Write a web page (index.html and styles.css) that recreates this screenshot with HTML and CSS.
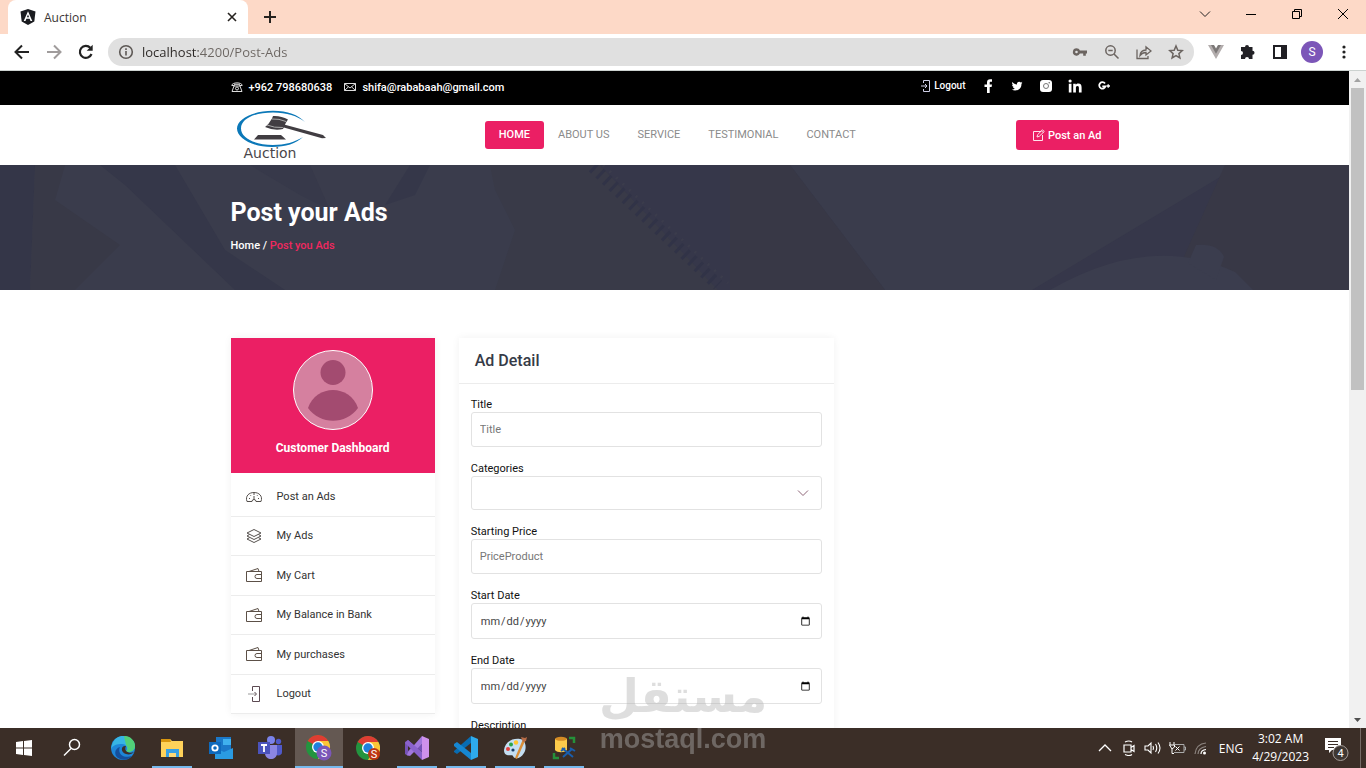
FILE: index.html
```html
<!DOCTYPE html>
<html lang="en">
  <head>
    <meta charset="utf-8" />
    <title>Auction</title>
    <meta name="viewport" content="width=device-width, initial-scale=1.0" />
    <link rel="stylesheet" href="styles.css">
  </head>

  <body>
    <!-- browser tabs -->
    <div class="tab-strip">
      <div class="tab">
        <svg width="16" height="16" viewBox="0 0 16 16"><path d="M8 0l7.500 2.600-1.200 10L8 16l-6.300-3.400L.5 2.600z" fill="#1a1c20"/><path d="M8 2.200L3.700 12h1.800l.9-2.200h3.200l.9 2.200h1.800zM8 5.500l1.100 2.800H6.900z" fill="#fff"/></svg>
        <span class="tab-title">Auction</span>
        <button class="icon-btn tab-close" aria-label="Close tab">
          <svg width="16" height="16" viewBox="0 0 16 16" fill="none" stroke="#26221f" stroke-width="1.600"><path d="M4 4l8 8M12 4l-8 8"/></svg>
        </button>
      </div>
      <button class="icon-btn tab-new" aria-label="New tab">
        <svg width="16" height="16" viewBox="0 0 16 16" stroke="#26221f" stroke-width="2"><path d="M8 2v12M2 8h12"/></svg>
      </button>
      <div class="window-buttons">
        <button class="icon-btn" aria-label="Search tabs"><svg width="12" height="12" viewBox="0 0 12 12" fill="none" stroke="#222"><path d="M1 3.500l5 5 5-5"/></svg></button>
        <button class="icon-btn" aria-label="Minimize"><svg width="12" height="12" viewBox="0 0 12 12" stroke="#000"><path d="M1 6.500h10"/></svg></button>
        <button class="icon-btn" aria-label="Restore"><svg width="12" height="12" viewBox="0 0 12 12" fill="none" stroke="#000"><path d="M1.500 3.500h7v7h-7zM3.500 3.500v-2h7v7h-2"/></svg></button>
        <button class="icon-btn" aria-label="Close"><svg width="12" height="12" viewBox="0 0 12 12" stroke="#000"><path d="M1 1l10 10M11 1L1 11"/></svg></button>
      </div>
    </div>

    <!-- address bar -->
    <div class="toolbar">
      <button class="icon-btn" aria-label="Back"><svg width="16" height="16" viewBox="0 0 16 16" fill="none" stroke="#222" stroke-width="2"><path d="M15 8H2M8 1.500L1.500 8 8 14.500"/></svg></button>
      <button class="icon-btn" aria-label="Forward"><svg width="16" height="16" viewBox="0 0 16 16" fill="none" stroke="#a09c9c" stroke-width="2"><path d="M1 8h13M8 1.500L14.500 8 8 14.500"/></svg></button>
      <button class="icon-btn" aria-label="Reload"><svg width="16" height="16" viewBox="0 0 16 16"><path d="M13.500 10A6 6 0 1 1 12.300 3.800" fill="none" stroke="#222" stroke-width="2.200"/><path d="M14.700.8v6H8.700z" fill="#222"/></svg></button>
      <div class="omnibox">
        <svg width="16" height="16" viewBox="0 0 16 16" fill="none" stroke="#5d5855" stroke-width="1.600"><circle cx="8" cy="8" r="6.300"/><path d="M8 7v4.500M8 4.200v1.700"/></svg>
        <input class="url" type="text" aria-label="Address" value="localhost:4200/Post-Ads">
        <button class="icon-btn" aria-label="Passwords"><svg width="16" height="16" viewBox="0 0 16 16" fill="#6b6460"><path fill-rule="evenodd" d="M4.500 4.200c1.500 0 2.800.9 3.400 2.300H15v3h-1.200v2.300h-2.600V9.500H7.900a3.700 3.700 0 1 1-3.400-5.300zm0 2.500a1.300 1.300 0 1 0 0 2.600 1.300 1.300 0 0 0 0-2.600z"/></svg></button>
        <button class="icon-btn" aria-label="Zoom"><svg width="16" height="16" viewBox="0 0 16 16" fill="none" stroke="#6b6460" stroke-width="1.500"><circle cx="6.500" cy="6.500" r="4.700"/><path d="M10 10l4.500 4.500M4.300 6.500h4.400"/></svg></button>
        <button class="icon-btn" aria-label="Share"><svg width="16" height="16" viewBox="0 0 16 16" fill="none" stroke="#6b6460" stroke-width="1.300"><path d="M1 5.500v9h11V12M4 11.500c.3-3.500 2.500-5.300 6-5.500V2.800L15 7l-5 4V8.500c-2.600 0-4.500.9-6 3z"/></svg></button>
        <button class="icon-btn" aria-label="Bookmark"><svg width="16" height="16" viewBox="0 0 16 16" fill="none" stroke="#6b6460" stroke-width="1.500"><path d="M8 2l1.800 4.200 4.500.4-3.400 3 1 4.400L8 11.600 4.100 14l1-4.400-3.400-3 4.500-.4z"/></svg></button>
      </div>
      <button class="icon-btn" aria-label="Vue devtools"><svg width="16" height="16" viewBox="0 0 16 16"><path d="M0 1h5l3 5 3-5h5L8 15z" fill="#b3adad"/><path d="M3 1h3l2 3.500L10 1h3L8 9.800z" fill="#7c7877"/></svg></button>
      <button class="icon-btn" aria-label="Extensions"><svg width="16" height="16" viewBox="0 0 16 16"><path d="M5 3a2 2 0 0 1 4 0h3.500v3.700a2 2 0 0 1 0 4.100V15H9a2 2 0 0 0-4 0H1v-4a2 2 0 0 0 0-4V3z" fill="#222126"/></svg></button>
      <button class="icon-btn" aria-label="Side panel"><svg width="16" height="16" viewBox="0 0 16 16"><path d="M2 2h12v12H2z" fill="#fff" stroke="#201f24" stroke-width="2"/><path d="M9 2h5v12H9z" fill="#201f24"/></svg></button>
      <button class="icon-btn" aria-label="Profile"><span class="profile">S</span></button>
      <button class="icon-btn" aria-label="Menu"><svg width="16" height="16" viewBox="0 0 16 16" fill="#222"><circle cx="8" cy="3" r="1.600"/><circle cx="8" cy="8" r="1.600"/><circle cx="8" cy="13" r="1.600"/></svg></button>
    </div>

    <div class="viewport">
      <div class="page">
        <div class="topbar">
          <div class="container topbar-row">
            <div class="contacts">
              <span class="contact">
                <svg width="12" height="12" viewBox="0 0 12 12" fill="none" stroke="#ddd"><path d="M.8 4.500C.8 1 11.200 1 11.200 4.500H8.500V3.300h-5v1.200zM3 5h6l2 5.500H1z"/><circle cx="6" cy="7.500" r="1.500"/></svg>
                +962 798680638
              </span>
              <span class="contact">
                <svg width="12" height="12" viewBox="0 0 12 12" fill="none" stroke="#ddd"><path d="M.5 2.500h11v7H.5zM.5 2.500L6 7l5.500-4.500M.5 9.500l4-3.700M11.500 9.500l-4-3.700"/></svg>
                shifa@rababaah@gmail.com
              </span>
            </div>
            <div class="socials">
              <a class="logout" href="#">
                <svg width="10" height="12" viewBox="0 0 10 12" fill="none" stroke="#cfcfe6"><path d="M2.500 3V.5h6v11h-6V9M0 6h6M4 4l2 2-2 2"/></svg>
                Logout
              </a>
              <a class="social" href="#" aria-label="Facebook"><svg width="14" height="14" viewBox="0 0 14 14" fill="#fff"><path d="M6 14V8H3.500V5.500H6v-2C6 1.300 7.200.3 9 .3h2v2.400H9.800c-.8 0-1.100.3-1.100 1v1.800H11L10.600 8H8.700v6z"/></svg></a>
              <a class="social" href="#" aria-label="Twitter"><svg width="12" height="12" viewBox="0 0 24 24" fill="#fff"><path d="M23 5.500c-.8.400-1.600.6-2.500.7.900-.6 1.600-1.400 1.900-2.500-.8.500-1.800.9-2.800 1.100A4.500 4.500 0 0 0 12 8.900C8.300 8.700 5 6.900 2.800 4.200c-1.200 2-.6 4.600 1.400 5.900-.7 0-1.400-.2-2-.5 0 2.100 1.500 4 3.600 4.400-.7.200-1.300.2-2 .1.600 1.800 2.200 3.100 4.200 3.100A9 9 0 0 1 1.400 19 12.700 12.700 0 0 0 20.900 7.700c.8-.6 1.600-1.300 2.100-2.200z"/></svg></a>
              <a class="social" href="#" aria-label="Instagram"><svg width="12" height="12" viewBox="0 0 12 12"><rect width="12" height="12" rx="3" fill="#fff"/><circle cx="6" cy="6" r="2.500" fill="none" stroke="#777"/><circle cx="9.200" cy="2.800" r=".7" fill="#555"/></svg></a>
              <a class="social" href="#" aria-label="LinkedIn"><svg width="14" height="14" viewBox="0 0 14 14" fill="#fff"><path d="M.8 4.800h2.700v8.700H.8zM5.200 4.800h2.600V6c.5-.9 1.400-1.400 2.600-1.400 2.300 0 3.200 1.400 3.200 3.800v5.100h-2.700V8.900c0-1.200-.3-2-1.400-2-1.200 0-1.600.8-1.600 2v4.600H5.200z"/><circle cx="2.100" cy="2" r="1.600"/></svg></a>
              <a class="social" href="#" aria-label="Google Plus"><svg width="12" height="12" viewBox="0 0 12 12" fill="none" stroke="#fff" stroke-width="1.800"><path d="M7 3.500A3.200 3.200 0 1 0 7.500 6.300H4.300"/><path d="M8.500 6h3.500M10.200 4.300v3.500" stroke-width="1.300"/></svg></a>
            </div>
          </div>
        </div>

        <header class="container header">
          <a class="logo" href="#">
            <svg width="92" height="38" viewBox="0 0 92 38"><path d="M69 12C62 5 52 .8 37 .8 17 .8 1 9 1 18.500S16 37 36 37c14 0 24-3.500 31-10-8 5-18 8-30 8C19 35 5 28 5 18.500S18 2.500 37 2.500c14 0 24 3.500 32 9.500z" fill="#0b78b8"/><path d="M37 6q8-.5 15 3.500l-2 3-3 6.500q-9 2-18-2l3-2.500 4-6z" fill="#413d42"/><path d="M36 9q7-.5 14 2.500M31 15q7 3 16 2.500" stroke="#aaa" fill="none"/><path d="M48 14.500l39 10.500 3 3-4 .3L46 17zM22 25h23l5 4.500H18z" fill="#413d42"/></svg>
            <span class="logo-text">Auction</span>
          </a>
          <nav class="nav">
            <a class="nav-link active" href="#">HOME</a>
            <a class="nav-link" href="#">ABOUT US</a>
            <a class="nav-link" href="#">SERVICE</a>
            <a class="nav-link" href="#">TESTIMONIAL</a>
            <a class="nav-link" href="#">CONTACT</a>
          </nav>
          <button class="post-btn">
            <svg width="12" height="12" viewBox="0 0 12 12" fill="none" stroke="#ffe3ec"><path d="M8 2.500H.5v9h9V6M4 8l.6-2.300L9.500.8l1.700 1.700-5 4.900zM8.500 1.800l1.700 1.700"/></svg>
            Post an Ad
          </button>
        </header>

        <section class="hero">
          <svg class="hero-art" viewBox="0 0 1349 125" preserveAspectRatio="xMidYMid slice">
            <path d="M0 0h35l-5 125H0z" fill="#343648"/>
            <path d="M100 0h75l50 85 60 40H235L125 20z" fill="#353749"/>
            <path d="M35 0h30l-10 35 65 45-45 45H30z" fill="#383947"/>
            <path d="M250 0h60l20 45-30-15z" fill="#37394a"/>
            <path d="M410 0h20l-15 30-30 10z" fill="#353749"/>
            <path d="M490 0h110l118 125H495l20-60-20-40z" fill="#393a48"/>
            <path d="M600 0h190l95 125H718z" fill="#36374a"/>
            <path d="M730 0h60l95 125H730z" fill="#383846"/>
            <path d="M593 2l125 118" stroke="#313347" stroke-width="12" stroke-dasharray="3 6"/>
            <path d="M603 0l125 118" stroke="#3b3c4c" stroke-width="3" stroke-dasharray="2 7"/>
            <path d="M1240 0h109v125h-317z" fill="#36374a"/>
            <path d="M1225 0h124v125h-180z" fill="#383846"/>
            <path d="M1050 125q100-58 185-18l18 18z" fill="#3b3d4e"/>
            <path d="M1188 98l8-18q22-2 28 12l-8 23z" fill="#3b3d4e"/>
          </svg>
          <div class="container hero-text">
            <h1>Post your Ads</h1>
            <p class="crumbs"><a href="#">Home</a> / <span class="current">Post you Ads</span></p>
          </div>
        </section>

        <main class="container content">
          <aside class="sidebar">
            <div class="user">
              <svg width="80" height="80" viewBox="0 0 80 80"><circle cx="40" cy="40" r="39.500" fill="#d5809f" stroke="#fff"/><circle cx="40" cy="22.500" r="12.500" fill="#a34b70"/><path d="M15 58C23 34 57 34 65 58 53 75 27 75 15 58z" fill="#a34b70"/></svg>
              <h2>Customer Dashboard</h2>
            </div>
            <ul class="menu">
              <li><a href="#"><svg width="16" height="16" viewBox="0 0 16 16" fill="none" stroke="#55504d"><path d="M1 13.500C-1 8 3 4.500 8 4.500s9 3.500 7 9h-5a2 2 0 0 0-4 0zM8 8v4"/><path d="M8 5v2M3 10.500h1M12 10.500h1M4.500 7.300l.7.700M11.500 7.300l-.7.700"/></svg>Post an Ads</a></li>
              <li><a href="#"><svg width="16" height="16" viewBox="0 0 16 16" fill="none" stroke="#55504d"><path d="M8 1.500l7 3.500-7 3.500L1 5zM3.500 6.500L1 8l7 3.500L15 8l-2.500-1.500M3.500 9.700L1 11l7 3.500 7-3.500-2.500-1.300"/></svg>My Ads</a></li>
              <li><a href="#"><svg width="16" height="16" viewBox="0 0 16 16"><g id="wallet" fill="none" stroke="#5c5047"><path d="M.5 4.500h15v10H.5zM3 4.500l9-3 1 3M15.500 7.500H11a2 2 0 0 0 0 4h4.500"/></g></svg>My Cart</a></li>
              <li><a href="#"><svg width="16" height="16" viewBox="0 0 16 16"><use href="#wallet"/></svg>My Balance in Bank</a></li>
              <li><a href="#"><svg width="16" height="16" viewBox="0 0 16 16"><use href="#wallet"/></svg>My purchases</a></li>
              <li><a href="#"><svg width="16" height="16" viewBox="0 0 16 16" fill="none" stroke="#5c4a52"><path d="M6.500 5V.5h7v15h-7V11"/><path d="M2 8h8" stroke="#999"/><path d="M8.500 6l2 2-2 2"/></svg>Logout</a></li>
            </ul>
          </aside>

          <form class="ad-form">
            <h2 class="form-title">Ad Detail</h2>
            <div class="form-body">
              <div class="field">
                <label for="title">Title</label>
                <input id="title" type="text" placeholder="Title">
              </div>
              <div class="field">
                <label for="category">Categories</label>
                <div class="select-wrap">
                  <select id="category"><option></option></select>
                  <svg width="12" height="8" viewBox="0 0 12 8" fill="none" stroke="#8e6577"><path d="M1 1.500l5 5 5-5"/></svg>
                </div>
              </div>
              <div class="field">
                <label for="price">Starting Price</label>
                <input id="price" type="text" placeholder="PriceProduct">
              </div>
              <div class="field">
                <label for="start">Start Date</label>
                <input id="start" type="date">
              </div>
              <div class="field">
                <label for="end">End Date</label>
                <input id="end" type="date">
              </div>
              <div class="field">
                <label for="description">Description</label>
                <textarea id="description" rows="4"></textarea>
              </div>
            </div>
          </form>
        </main>
      </div>
      <div class="scrollbar">
        <svg width="17" height="17" viewBox="0 0 17 17"><path d="M5 11l3.500-4 3.500 4z" fill="#a3a3a3"/></svg>
        <div class="thumb"></div>
        <svg width="17" height="17" viewBox="0 0 17 17"><path d="M5 7l3.500 4L12 7z" fill="#505050"/></svg>
      </div>
    </div>

    <!-- taskbar -->
    <div class="taskbar">
      <button class="task" aria-label="Start"><svg width="24" height="24" viewBox="0 0 24 24" fill="#fff"><path d="M4 6l7-1v6.500H4zM12 4.900L20 4v7.500h-8zM4 12.500h7V19l-7-1zM12 12.500h8V20l-8-.9z"/></svg></button>
      <button class="task" aria-label="Search"><svg width="24" height="24" viewBox="0 0 24 24" fill="none" stroke="#fff" stroke-width="1.500"><circle cx="14.500" cy="8.500" r="5"/><path d="M11 12.500L4 19.500"/></svg></button>
      <div class="apps">
        <button class="task" aria-label="Edge"><svg width="24" height="24" viewBox="0 0 24 24"><circle cx="12" cy="12" r="12" fill="#1e86d8"/><path d="M1 9C3 2 8 0 12 0c7 0 12 5 12 10 0 5-5 7-9 5.500 2-1.500 2-7.500-4-7.500C6 8 2 9 0 13z" fill="#37b5e4"/><path d="M13 0c7 0 11 5 11 10 0 5-5 7-9 5.500 2-2 2-4 0-6.500z" fill="#51d078"/><path d="M9 11c-3 6 3 12 12 9-4 5-12 5-16 0-2-4 0-8 4-9z" fill="#154f9c"/><path d="M15 10c-5-1-6 6 0 8 3 1 6 0 8-2-4 2-11 0-8-6z" fill="#3d2f28"/></svg></button>
        <button class="task running" aria-label="File Explorer"><svg width="24" height="24" viewBox="0 0 24 24"><path d="M1 3h9l2 2h11v16H1z" fill="#ffd25a"/><path d="M1 3h9l1 3H1z" fill="#d9960f"/><path d="M6 13h13v8h-3v-4H9v4H6z" fill="#38a0e4"/><path d="M9 17h7v4H9z" fill="#ffd977"/></svg></button>
        <button class="task" aria-label="Outlook"><svg width="24" height="24" viewBox="0 0 24 24"><path d="M7 1h15v21H7z" fill="#1b78c9"/><path d="M14 3h8v6h-8z" fill="#3fb0ee"/><path d="M6 12l9 4 9-4v11H6z" fill="#2a9be2"/><path d="M0 6h12v12H0z" fill="#0e6abd"/><circle cx="6" cy="12" r="2.700" fill="none" stroke="#fff" stroke-width="1.800"/></svg></button>
        <button class="task" aria-label="Teams"><svg width="24" height="24" viewBox="0 0 24 24"><circle cx="13" cy="4" r="4" fill="#7b83eb"/><circle cx="20.500" cy="5.500" r="2.700" fill="#5059c9"/><path d="M17 9h7v7c0 3-3 4-6 3z" fill="#5059c9"/><path d="M7 9h12v8c0 8-12 8-12 0z" fill="#8b86e4"/><path d="M0 6h12v12H0z" fill="#4b53bc"/><path d="M3 9h6M6 9v7" stroke="#fff" stroke-width="1.800"/></svg></button>
        <button class="task running open" aria-label="Chrome"><svg width="26" height="26" viewBox="0 0 26 26"><g id="chrome"><circle cx="12" cy="12" r="12" fill="#23943f"/><path d="M12 12L1.600 6A12 12 0 0 1 22.400 6z" fill="#df3d32"/><path d="M12 6h10.400A12 12 0 0 1 12 24l5-9z" fill="#fbc637"/><circle cx="12" cy="12" r="6" fill="#fff"/><circle cx="12" cy="12" r="4.700" fill="#1f80dd"/></g><circle cx="18" cy="18" r="7.500" fill="#7b57b8"/><text class="badge-text" x="18" y="22">S</text></svg></button>
        <button class="task" aria-label="Chrome profile"><svg width="24" height="24" viewBox="0 0 24 24"><use href="#chrome"/><circle cx="18" cy="18" r="6" fill="#bd3513"/><text class="badge-text" x="18" y="22">S</text></svg></button>
        <button class="task running" aria-label="Visual Studio"><svg width="24" height="24" viewBox="0 0 24 24"><path fill-rule="evenodd" d="M0 6l3-2 14 12V8L3 20l-3-2zM3 9v6l3-3z" fill="#7652b8"/><path d="M17 0v8L5 20l-3-1 1-3z" fill="#a177dc"/><path d="M3 4l14 12v8L0 7z" fill="#8a62cc"/><path d="M17 0l7 3v18l-7 3z" fill="#cf91ec"/></svg></button>
        <button class="task running" aria-label="Visual Studio Code"><svg width="24" height="24" viewBox="0 0 24 24"><path d="M17 0v7L3 18l-3-2v-1L17 0z" fill="#086cb2"/><path d="M0 8l3-2 14 11v7L0 10z" fill="#1687d2"/><path d="M17 0l7 3v18l-7 3z" fill="#2eabec"/></svg></button>
        <button class="task running" aria-label="Paint"><svg width="24" height="24" viewBox="0 0 24 24"><path d="M1 14C2 6 9 2 17 3c6 1 7 9 4 14-4 7-10 6-11 3-1-2-9 2-9-6z" fill="#c4def2"/><circle cx="5" cy="13" r="2" fill="#e2403e"/><circle cx="8" cy="8.500" r="2" fill="#27a34a"/><circle cx="13" cy="6.500" r="2.200" fill="#ffc52f"/><circle cx="10" cy="14" r="1.600" fill="#173b65"/><path d="M20 3l2 2-8 18-2-1z" fill="#da8e38"/><path d="M18 1l4 1 2-1-1 4-3 1z" fill="#b66c47"/></svg></button>
        <button class="task running" aria-label="SQL Server Management Studio"><svg width="24" height="24" viewBox="0 0 24 24"><path d="M3 3v11c2 3 10 3 12 0V3z" fill="#fdcb4b"/><ellipse cx="9" cy="2.800" rx="6" ry="2" fill="#d58c24"/><path d="M17 2h5v5M2 17v5h5" fill="none" stroke="#25913a" stroke-width="2.500"/><path d="M10 12l11 9M20 13L11 21M9 15l4-3M18 12l5 3" stroke="#195eae" stroke-width="2"/></svg></button>
      </div>
      <div class="tray">
        <svg width="24" height="16" viewBox="0 0 24 16" fill="none" stroke="#fff" stroke-width="1.300"><path d="M6 11l6-6 6 6"/></svg>
        <svg width="24" height="16" viewBox="0 0 24 16" fill="none" stroke="#fff" stroke-width="1.200"><path d="M7 5h7v7H7zM14 7.500l3-2v6l-3-2M8 2q4-2 7 0M8 14.500q4 2 7 0"/></svg>
        <svg width="24" height="16" viewBox="0 0 24 16" fill="none" stroke="#fff" stroke-width="1.100"><path d="M4 6h3l3-3v10l-3-3H4zM12 6q1 2 0 4M14.500 4q2.500 4 0 8M17 2.500q4 5.500 0 11"/></svg>
        <svg width="24" height="16" viewBox="0 0 24 16" fill="none" stroke="#fff"><path d="M5 2v3M9 2v3M4.500 5h5v2l-2.500 2zM7 9v4.500h2"/><path d="M10 4.500h9v8H9M19 7h1.500v3H19" stroke="#aaa"/><path d="M10.500 6.500l4 4M14.500 6.500l-4 4"/></svg>
        <svg width="24" height="16" viewBox="0 0 24 16" fill="none" stroke="#8d8580" stroke-width="1.200"><path d="M6 14Q7 4 17 3M9 14q0-6 8-7.500"/><path d="M12 14q0-4 5-4.500" stroke="#fff"/><circle cx="15.500" cy="13" r="1.500" fill="#fff" stroke="none"/></svg>
        <span class="lang">ENG</span>
        <div class="clock"><span>3:02 AM</span><span>4/29/2023</span></div>
        <button class="notify" aria-label="Notifications"><svg width="26" height="26" viewBox="0 0 26 26"><path d="M2 3h16v12H9l-3 3v-3H2z" fill="#fff"/><path d="M5 6.500h10M5 9.500h10M5 12.500h6" stroke="#3b2e27"/><circle cx="17.500" cy="18" r="7.500" fill="#3f3732" stroke="#a49c98"/><text class="badge-text" x="17.500" y="22">4</text></svg></button>
      </div>
    </div>

    <div class="watermark">
      <span class="watermark-ar" lang="ar">مستقل</span>
      <span class="watermark-en">mostaql.com</span>
    </div>
  </body>
</html>
```
FILE: styles.css
```css
* {
  box-sizing: border-box;
}
body {
  margin: 0;
  height: 100vh;
  display: flex;
  flex-direction: column;
  overflow: hidden;
  background: #fff;
  font-family: Roboto, sans-serif;
  font-size: 11px;
}
a {
  color: inherit;
  text-decoration: none;
}
button,
input,
select,
textarea {
  font-family: inherit;
}
button {
  border: 0;
  padding: 0;
  background: none;
  cursor: pointer;
}
svg {
  flex: none;
}
.icon-btn {
  width: 32px;
  height: 28px;
  display: flex;
  flex: none;
  align-items: center;
  justify-content: center;
}

/* browser */
.tab-strip {
  height: 34px;
  flex: none;
  display: flex;
  padding-left: 8px;
  background: #fdd9c7;
}
.tab {
  width: 240px;
  height: 34px;
  display: flex;
  align-items: center;
  gap: 8px;
  padding-left: 12px;
  background: #fff;
  border-radius: 8px 8px 0 0;
  font: 12px "Open Sans", sans-serif;
  color: #3a3533;
}
.tab-close {
  margin-left: auto;
}
.tab-new {
  height: 34px;
  margin-left: 6px;
}
.window-buttons {
  display: flex;
  margin-left: auto;
}
.window-buttons .icon-btn {
  width: 46px;
}
.toolbar {
  height: 37px;
  flex: none;
  display: flex;
  align-items: center;
  padding: 0 6px;
  background: #fff;
  border-bottom: 1px solid #ccd2d0;
}
.omnibox {
  flex: 1;
  height: 28px;
  display: flex;
  align-items: center;
  margin: 0 6px;
  padding: 0 2px 0 10px;
  background: #e0e0e0;
  border-radius: 14px;
}
.url {
  flex: 1;
  min-width: 0;
  padding: 0 8px;
  border: 0;
  outline: none;
  font: 13px "Open Sans", sans-serif;
  /* host part is darker than the rest of the address */
  background: linear-gradient(to right, #2b2725 64px, #6b6561 64px);
  -webkit-background-clip: text;
  background-clip: text;
  color: transparent;
}
.profile {
  width: 22px;
  height: 22px;
  border-radius: 50%;
  background: #7c56b8;
  color: #fff;
  font-size: 12px;
  line-height: 22px;
}
.viewport {
  flex: 1;
  min-height: 0;
  display: flex;
}
.page {
  flex: 1;
  overflow: hidden;
}
.scrollbar {
  width: 17px;
  display: flex;
  flex-direction: column;
  align-items: center;
  background: #f1f1f1;
}
.thumb {
  width: 13px;
  height: 46%;
  margin-bottom: auto;
  background: #c1c1c1;
}

/* page */
.container {
  width: 100%;
  max-width: 888px;
  margin: 0 auto;
}
.topbar {
  background: #000;
  color: #fff;
  font-weight: 500;
}
.topbar-row,
.contacts,
.contact,
.socials,
.logout {
  display: flex;
  align-items: center;
}
.topbar-row {
  height: 34px;
  justify-content: space-between;
}
.contacts {
  gap: 12px;
  padding-bottom: 2px;
}
.contact {
  gap: 6px;
}
.socials {
  padding-bottom: 5px;
}
.logout {
  gap: 3px;
  margin-right: 8px;
  font-size: 10px;
}
.social {
  width: 29px;
  height: 14px;
  display: flex;
  align-items: center;
  justify-content: center;
}
.header {
  height: 60px;
  display: flex;
  align-items: center;
  justify-content: space-between;
}
.logo {
  width: 108px;
  padding: 0 0 3px 5px;
  display: flex;
  flex-direction: column;
}
.logo-text {
  padding-left: 8px;
  font: 14px/10px "DejaVu Sans", sans-serif;
  color: #4a464a;
}
.nav {
  display: flex;
}
.nav-link {
  padding: 0 14px;
  line-height: 28px;
  color: #8b8b8b;
}
.nav-link.active {
  background: #eb1f64;
  color: #fff;
  border-radius: 3px;
  font-weight: 500;
}
.post-btn {
  height: 30px;
  padding: 0 17px;
  display: flex;
  align-items: center;
  gap: 3px;
  background: #eb1f64;
  color: #fff;
  border-radius: 3px;
  font-size: 11px;
  font-weight: 500;
}
.hero {
  height: 125px;
  display: grid;
  background: #3a3c4c;
  color: #fff;
}
.hero-art,
.hero-text {
  grid-area: 1 / 1;
}
.hero-art {
  width: 100%;
  height: 125px;
}
.hero-text {
  z-index: 1;
  padding-top: 33px;
}
.hero h1 {
  margin: 0;
  font-size: 25px;
  line-height: 30px;
}
.crumbs {
  margin: 10px 0 0;
  line-height: 16px;
  font-weight: 500;
}
.current {
  color: #f0285f;
}
.content {
  display: flex;
  align-items: flex-start;
  gap: 24px;
  padding-top: 48px;
}
.sidebar {
  flex: 0 0 23%;
  box-shadow: 0 0 8px rgba(0, 0, 0, 0.06);
}
.user {
  height: 135px;
  padding-top: 12px;
  background: #eb1f64;
  color: #fff;
  text-align: center;
}
.user svg {
  display: block;
  margin: 0 auto 10px;
}
.user h2 {
  margin: 0;
  font-size: 12px;
  line-height: 16px;
}
.menu {
  min-height: 241px;
  display: grid;
  grid-auto-rows: 1fr;
  margin: 0;
  padding: 4px 0 0;
  list-style: none;
}
.menu li {
  border-bottom: 1px solid #ececec;
}
.menu a {
  height: 100%;
  display: flex;
  align-items: center;
  gap: 15px;
  padding-left: 15px;
  color: #333;
}
.ad-form {
  width: 375px;
  box-shadow: 0 0 8px rgba(0, 0, 0, 0.06);
}
.form-title {
  margin: 0;
  padding: 0 16px;
  border-bottom: 1px solid #ececec;
  color: #363b47;
  font-size: 16px;
  font-weight: 500;
  line-height: 45px;
}
.form-body {
  padding: 12px;
}
.field {
  margin-bottom: 13px;
}
.field label {
  display: block;
  padding-top: 2px;
  line-height: 14px;
  color: #111;
}
.field input,
.field select,
.field textarea {
  display: block;
  width: 100%;
  height: 35px;
  padding: 0 8px;
  border: 1px solid #e2e2e2;
  border-radius: 3px;
  background: #fff;
  color: #444;
  font-size: 11px;
}
.field input::placeholder {
  color: #777;
}
.field input[type="date"] {
  height: 36px;
}
.select-wrap {
  display: grid;
  align-items: center;
}
.select-wrap select,
.select-wrap svg {
  grid-area: 1 / 1;
}
.select-wrap select {
  height: 34px;
  appearance: none;
}
.select-wrap svg {
  justify-self: end;
  margin-right: 13px;
  pointer-events: none;
}

/* taskbar */
.taskbar {
  height: 40px;
  flex: none;
  display: flex;
  background: #3b2e27;
  color: #fff;
}
.task {
  width: 48px;
  height: 40px;
  display: flex;
  align-items: center;
  justify-content: center;
  background: linear-gradient(#76b9ed, #76b9ed) no-repeat center bottom / 0 2px;
}
.task.running {
  background-size: 40px 2px;
}
.task.open {
  background-color: #645852;
  background-size: 48px 2px;
}
.apps {
  display: flex;
  gap: 1px;
  margin-left: 3px;
}
.badge-text {
  fill: #fff;
  font: 11px Roboto, sans-serif;
  text-anchor: middle;
}
.tray {
  display: flex;
  align-items: center;
  margin-left: auto;
  font: 12px "Open Sans", sans-serif;
}
.lang {
  margin: 0 9px 0 6px;
}
.clock {
  display: flex;
  flex-direction: column;
  align-items: center;
  line-height: 18px;
}
.notify {
  width: 36px;
  height: 40px;
  display: flex;
  align-items: center;
  justify-content: center;
  margin: 0 6px 0 9px;
}
.tray::after {
  content: "";
  width: 5px;
  height: 40px;
  border-left: 1px solid #756b66;
}

.watermark {
  position: fixed;
  left: 0;
  right: 0;
  bottom: 14px;
  display: flex;
  flex-direction: column;
  align-items: center;
  color: #b3b3b3;
  font-weight: bold;
  opacity: 0.43;
  pointer-events: none;
}
.watermark-ar {
  font-family: "DejaVu Sans", sans-serif;
  font-size: 46px;
  line-height: 56px;
}
.watermark-en {
  font-family: "Liberation Sans", sans-serif;
  font-size: 27px;
  line-height: 30px;
}
```
